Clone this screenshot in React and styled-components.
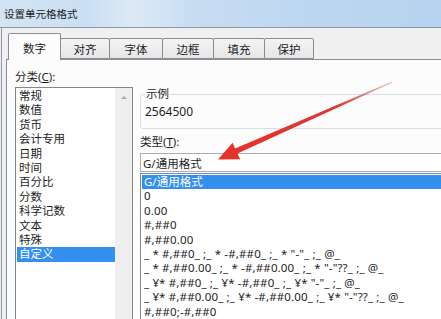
import styled, { createGlobalStyle } from 'styled-components';

const GlobalStyle = createGlobalStyle`
    html, body {
        margin: 0;
        padding: 0;
        background: #f0f0f0;
    }
    body {
        font-family: "Noto Sans", "Noto Sans CJK SC", sans-serif;
        color: #1e1e1e;
    }
`;

const Window = styled.div`
    position: relative;
    width: 441px;
    height: 319px;
    overflow: hidden;
    display: flex;
    flex-direction: column;
    background: #e9eef4;
`;

const TitleBar = styled.div`
    flex: none;
    height: 27px;
    display: flex;
    align-items: center;
    padding-left: 4px;
    font-size: 10.5px;
    color: #1a1a1a;
    background: linear-gradient(to right, #d3e4f4 0%, #cadff3 20%, #dde9f5 30%, #c6dcf2 45%, #bcd6f0 75%, #b7d3ef 100%);
    border-bottom: 1px solid #8e99a6;
`;

const Body = styled.div`
    flex: 1;
    width: 480px;
    margin-left: 1px;
    border-left: 1px solid #8e99a6;
    background: #f0f0f0;
    display: flex;
    flex-direction: column;
`;

const TabStrip = styled.div`
    flex: none;
    height: 31px;
    display: flex;
    align-items: flex-end;
    padding-left: 5px;
`;

const Tab = styled.div`
    box-sizing: border-box;
    width: ${p => p.$w}px;
    height: ${p => (p.$active ? 27 : 21)}px;
    margin-left: -1px;
    margin-bottom: ${p => (p.$active ? -1 : 0)}px;
    position: relative;
    z-index: ${p => (p.$active ? 1 : 0)};
    border: 1px solid #898c95;
    border-bottom: ${p => (p.$active ? 'none' : '1px solid #898c95')};
    border-radius: 2px 2px 0 0;
    background: ${p => (p.$active ? '#fcfcfc' : 'linear-gradient(#f4f4f4, #e6e6e6)')};
    display: flex;
    align-items: center;
    justify-content: center;
    padding-top: ${p => (p.$active ? 1 : 0)}px;
    font-size: 11.5px;

    &:first-child {
        margin-left: 1px;
    }
`;

const Panel = styled.div`
    flex: 1;
    margin-left: 4px;
    border-left: 1px solid #898c95;
    border-top: 1px solid #898c95;
    background: #fcfcfc;
    display: flex;
    gap: 7px;
    padding: 10px 0 0 8px;
`;

const LeftColumn = styled.div`
    width: 118px;
    display: flex;
    flex-direction: column;
`;

const RightColumn = styled.div`
    flex: 1;
    display: flex;
    flex-direction: column;
    padding-top: 17px;
`;

const Label = styled.div`
    font-size: 11.5px;
    line-height: 14px;
    height: 14px;
    margin-bottom: ${p => p.$mb || 0}px;
    margin-top: ${p => p.$mt || 0}px;
    white-space: nowrap;
`;

const ListBox = styled.div`
    box-sizing: border-box;
    border: 1px solid #828790;
    background: #fff;
    display: flex;
    height: 260px;
`;

const Items = styled.div`
    flex: 1;
    padding: 1px 0 0 1px;
`;

const Item = styled.div`
    height: 14.4px;
    line-height: 14.4px;
    padding-left: 2px;
    font-size: 11.5px;
    letter-spacing: ${p => (p.$wide ? 0.15 : 0)}px;
    white-space: pre;
    background: ${p => (p.$selected ? '#3390ee' : 'transparent')};
    color: ${p => (p.$selected ? '#fff' : '#1e1e1e')};
`;

const ScrollTrack = styled.div`
    width: 17px;
    background: #eeeeee;
    display: flex;
    justify-content: center;
    padding-top: 8px;
    box-sizing: border-box;
`;

const UpArrow = styled.div`
    width: 0;
    height: 0;
    border-left: 3px solid transparent;
    border-right: 3px solid transparent;
    border-bottom: 3px solid #a8a8a8;
`;

const Group = styled.fieldset`
    box-sizing: border-box;
    margin: 0;
    height: 42px;
    padding: 0 4px;
    border: 1px solid #d5dfe5;
    border-radius: 3px;

    legend {
        padding: 0 1px;
        font-size: 11.5px;
        line-height: 14px;
    }
`;

const SampleValue = styled.div`
    font-size: 12px;
    line-height: 16px;
    padding-top: 3px;
`;

const Input = styled.div`
    box-sizing: border-box;
    height: 19px;
    margin-bottom: 1px;
    border: 1px solid #abadb3;
    background: #fff;
    padding-left: 2px;
    display: flex;
    align-items: center;
    font-size: 11.5px;
`;

const ArrowLayer = styled.svg`
    position: absolute;
    left: 0;
    top: 0;
    pointer-events: none;
`;

const tabs = [
    { name: '数字', w: 53, active: true },
    { name: '对齐', w: 50 },
    { name: '字体', w: 54 },
    { name: '边框', w: 52 },
    { name: '填充', w: 52 },
    { name: '保护', w: 50 },
];

const categories = ['常规', '数值', '货币', '会计专用', '日期', '时间', '百分比', '分数', '科学记数', '文本', '特殊', '自定义'];

const formats = [
    'G/通用格式',
    '0',
    '0.00',
    '#,##0',
    '#,##0.00',
    '_ * #,##0_ ;_ * -#,##0_ ;_ * "-"_ ;_ @_',
    '_ * #,##0.00_ ;_ * -#,##0.00_ ;_ * "-"??_ ;_ @_',
    '_ ¥* #,##0_ ;_ ¥* -#,##0_ ;_ ¥* "-"_ ;_ @_',
    '_ ¥* #,##0.00_ ;_ ¥* -#,##0.00_ ;_ ¥* "-"??_ ;_ @_',
    '#,##0;-#,##0',
];

function Arrow() {
    return (
        <ArrowLayer width="441" height="319" viewBox="0 0 441 319">
            <defs>
                <linearGradient id="shaft" x1="218" y1="159" x2="392" y2="82" gradientUnits="userSpaceOnUse">
                    <stop offset="0" stopColor="#e8302a" />
                    <stop offset="0.7" stopColor="#dc3a36" />
                    <stop offset="1" stopColor="#c07070" stopOpacity="0.4" />
                </linearGradient>
            </defs>
            <path
                d="M218 159.5 L232.6 142.8 L235.1 148.4 L392 81.5 L392.4 82.4 L237.5 153.6 L240.2 159.3 Z"
                fill="url(#shaft)"
            />
        </ArrowLayer>
    );
}

export default function App() {
    return (
        <Window>
            <GlobalStyle />
            <TitleBar>设置单元格格式</TitleBar>
            <Body>
                <TabStrip>
                    {tabs.map(t => (
                        <Tab key={t.name} $w={t.w} $active={t.active}>{t.name}</Tab>
                    ))}
                </TabStrip>
                <Panel>
                    <LeftColumn>
                        <Label $mb={3}>分类(<u>C</u>):</Label>
                        <ListBox>
                            <Items>
                                {categories.map(c => (
                                    <Item key={c} $selected={c === '自定义'}>{c}</Item>
                                ))}
                            </Items>
                            <ScrollTrack>
                                <UpArrow />
                            </ScrollTrack>
                        </ListBox>
                    </LeftColumn>
                    <RightColumn>
                        <Group>
                            <legend>示例</legend>
                            <SampleValue>2564500</SampleValue>
                        </Group>
                        <Label $mt={6} $mb={4}>类型(<u>T</u>):</Label>
                        <Input>G/通用格式</Input>
                        <ListBox>
                            <Items>
                                {formats.map((f, i) => (
                                    <Item key={f} $selected={i === 0} $wide={i > 0}>{f}</Item>
                                ))}
                            </Items>
                        </ListBox>
                    </RightColumn>
                </Panel>
            </Body>
            <Arrow />
        </Window>
    );
}
